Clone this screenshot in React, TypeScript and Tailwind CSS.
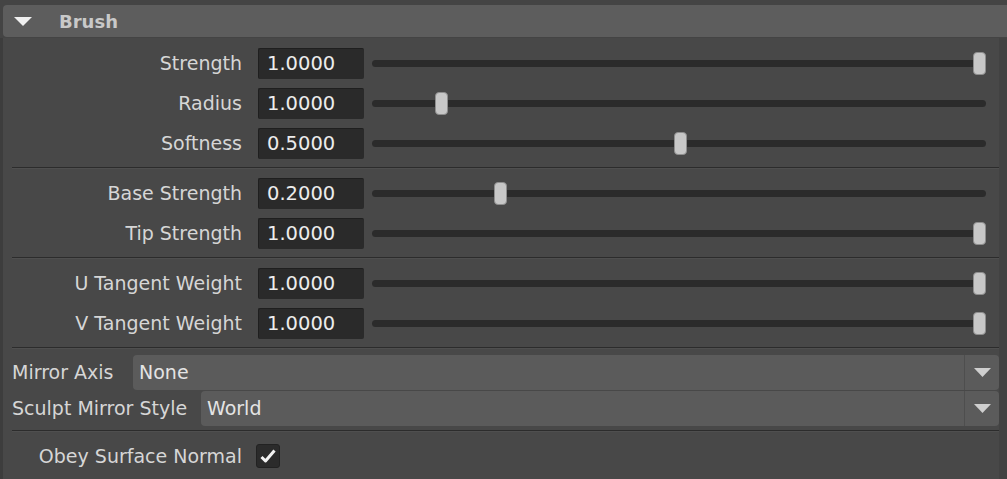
import React from "react";

const font = { fontFamily: '"DejaVu Sans", "Liberation Sans", sans-serif' };

type SliderRow = { label: string; value: string; pos: number };

const groups: SliderRow[][] = [
  [
    { label: "Strength", value: "1.0000", pos: 1 },
    { label: "Radius", value: "1.0000", pos: 0.105 },
    { label: "Softness", value: "0.5000", pos: 0.502 },
  ],
  [
    { label: "Base Strength", value: "0.2000", pos: 0.203 },
    { label: "Tip Strength", value: "1.0000", pos: 1 },
  ],
  [
    { label: "U Tangent Weight", value: "1.0000", pos: 1 },
    { label: "V Tangent Weight", value: "1.0000", pos: 1 },
  ],
];

const Separator = () => (
  <div className="h-[10px] flex flex-col justify-center pl-[9px]">
    <div className="h-[2px] border-t border-[#2c2c2c] border-b-[1px] border-b-[#4f4f4f]" />
  </div>
);

const Row = ({ row }: { row: SliderRow }) => (
  <div className="h-[40px] flex items-center">
    <div className="w-[239px] text-right text-[19px] text-[#d6d6d6]">{row.label}</div>
    <div className="ml-[16px] w-[106px] h-[31px] bg-[#2a2a2a] border-t border-l border-[#1f1f1f] rounded-[2px] flex items-center pl-[8px] text-[19.5px] text-[#ececec]">
      {row.value}
    </div>
    {/* SLIDER */}
    <div className="ml-[8px] mr-[13px] flex-1 relative h-[24px] flex items-center">
      <div className="w-full h-[7px] rounded-full bg-[#2b2b2b]" />
      <div
        className="absolute top-[1px] w-[13px] h-[23px] rounded-[4px] bg-[#c7c7c7] border border-[#8e8e8e]"
        style={{ left: `calc(${row.pos} * (100% - 13px))` }}
      />
    </div>
  </div>
);

const Dropdown = ({ label, value, labelWidth }: { label: string; value: string; labelWidth: string }) => (
  <div className="h-[35px] flex items-center">
    <div className={`${labelWidth} shrink-0 pl-[9px] text-[19px] text-[#d6d6d6] whitespace-nowrap`}>{label}</div>
    <div className="flex-1 h-full bg-[#5b5b5b] rounded-[4px] flex items-center">
      <div className="flex-1 pl-[6px] text-[19px] text-[#e4e4e4]">{value}</div>
      <div className="w-[35px] h-full border-l border-[#4e4e4e] flex items-center justify-center">
        <svg width="17" height="9" viewBox="0 0 17 9">
          <path d="M0 0 H17 L8.5 9 Z" fill="#cfcfcf" />
        </svg>
      </div>
    </div>
  </div>
);

export default function App() {
  return (
    <div className="w-[1007px] h-[479px] bg-[#444444] overflow-hidden flex flex-col" style={font}>
      {/* HEADER */}
      <div className="mt-[5px] ml-[3px] h-[32px] bg-[#5d5d5d] rounded-l-[4px] flex items-center shrink-0">
        <svg className="ml-[11px]" width="18" height="9" viewBox="0 0 18 9">
          <path d="M0 0 H18 L9 9 Z" fill="#f0f0f0" />
        </svg>
        <span className="ml-[27px] text-[18px] font-bold text-[#c9c9c9]">Brush</span>
      </div>
      {/* BODY */}
      <div className="flex flex-1 mt-[1px]">
        <div className="w-[3px] bg-[#3d3d3d]" />
        <div className="flex-1 bg-[#484848] flex flex-col pt-[5px]">
          {groups.map((g, i) => (
            <div key={i}>
              {g.map((r) => (
                <Row key={r.label} row={r} />
              ))}
              <Separator />
            </div>
          ))}
          <div className="flex flex-col gap-[1px] pt-[2px]">
            <Dropdown label="Mirror Axis" value="None" labelWidth="w-[130px]" />
            <Dropdown label="Sculpt Mirror Style" value="World" labelWidth="w-[198px]" />
          </div>
          <Separator />
          <div className="h-[40px] flex items-center">
            <div className="w-[239px] text-right text-[19px] text-[#d6d6d6]">Obey Surface Normal</div>
            <div className="ml-[14px] w-[24px] h-[24px] bg-[#2b2b2b] border border-[#222] rounded-[3px] flex items-center justify-center">
              <svg width="16" height="14" viewBox="0 0 16 14">
                <path d="M1.5 8 L5.5 12 L14.5 1.5" stroke="#f2f2f2" strokeWidth="3" fill="none" strokeLinejoin="round" />
              </svg>
            </div>
          </div>
        </div>
        <div className="w-[8px] bg-[#424242]" />
      </div>
    </div>
  );
}
